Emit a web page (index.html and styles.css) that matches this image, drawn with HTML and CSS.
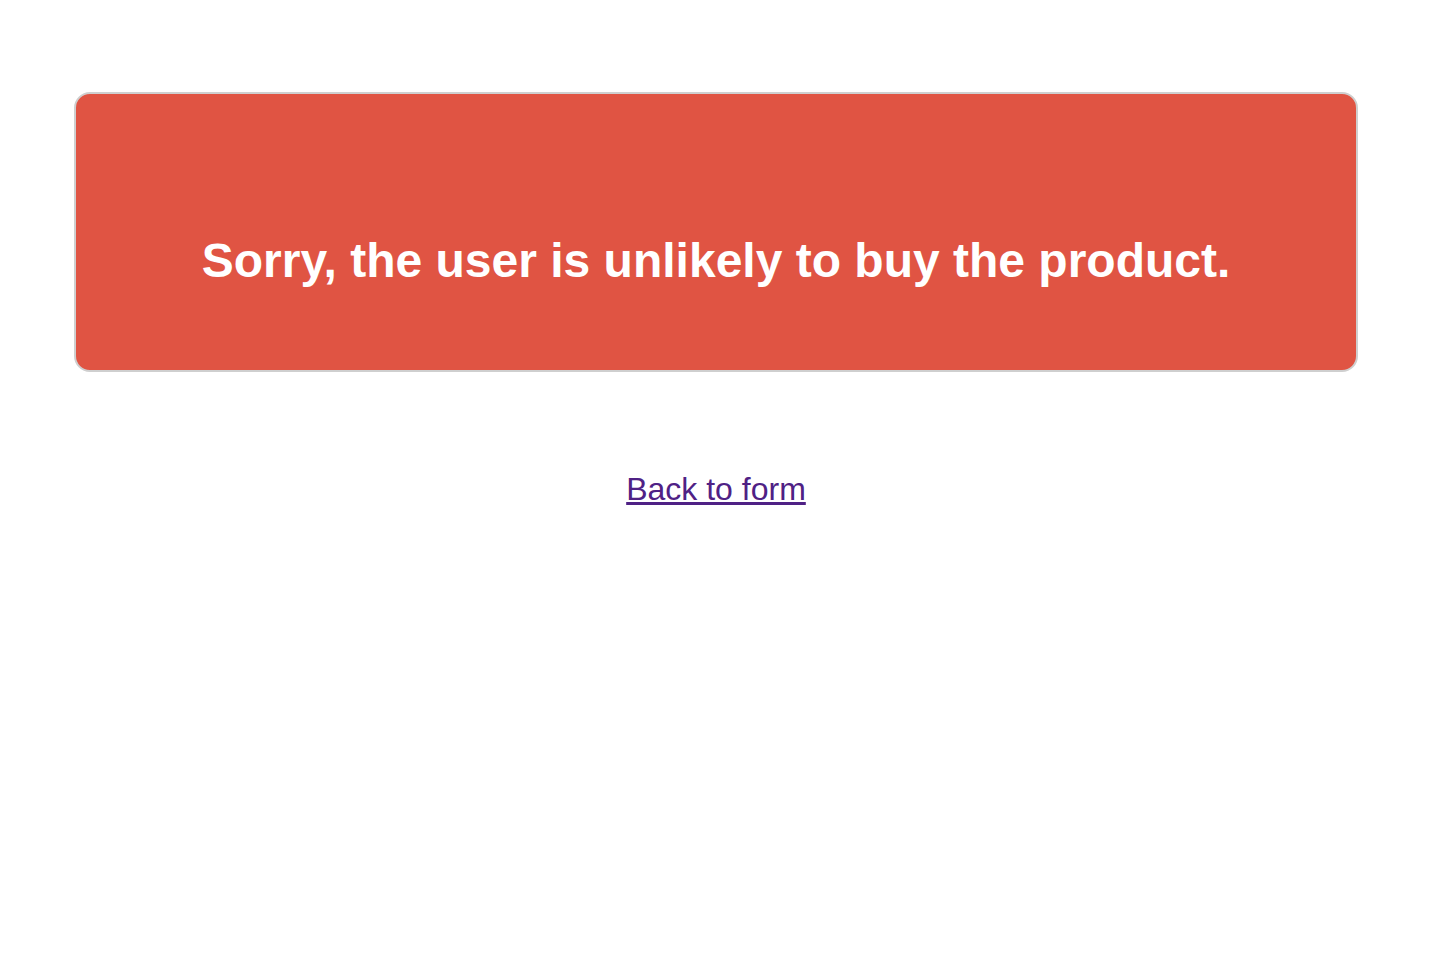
FILE: index.html
```html
<!DOCTYPE html>
<html>
<head>
<meta charset="utf-8">
<title>Result</title>
<link rel="stylesheet" href="styles.css">
</head>
<body>
<main class="page">
  <div class="result">
    <h1 class="result-text">Sorry, the user is unlikely to buy the product.</h1>
  </div>
  <p class="back"><a class="back-link" href="#">Back to form</a></p>
</main>
</body>
</html>
```
FILE: styles.css
```css
html, body {
  margin: 0;
  padding: 0;
  background: #ffffff;
}
body {
  font-family: "Liberation Sans", Arial, sans-serif;
}
.page {
  padding: 92px 78px 0 74px;
}
.result {
  box-sizing: border-box;
  height: 280px;
  background: #e05443;
  border: 2px solid #cfcfcf;
  border-radius: 16px;
  display: flex;
  align-items: center;
  justify-content: center;
}
.result-text {
  margin: 0;
  padding-top: 56px;
  color: #ffffff;
  font-size: 48px;
  font-weight: bold;
  text-align: center;
}
.back {
  margin: 99px 0 0;
  text-align: center;
  font-size: 32px;
  line-height: 37px;
}
.back-link {
  color: #4f2185;
  text-decoration: underline;
}
```
